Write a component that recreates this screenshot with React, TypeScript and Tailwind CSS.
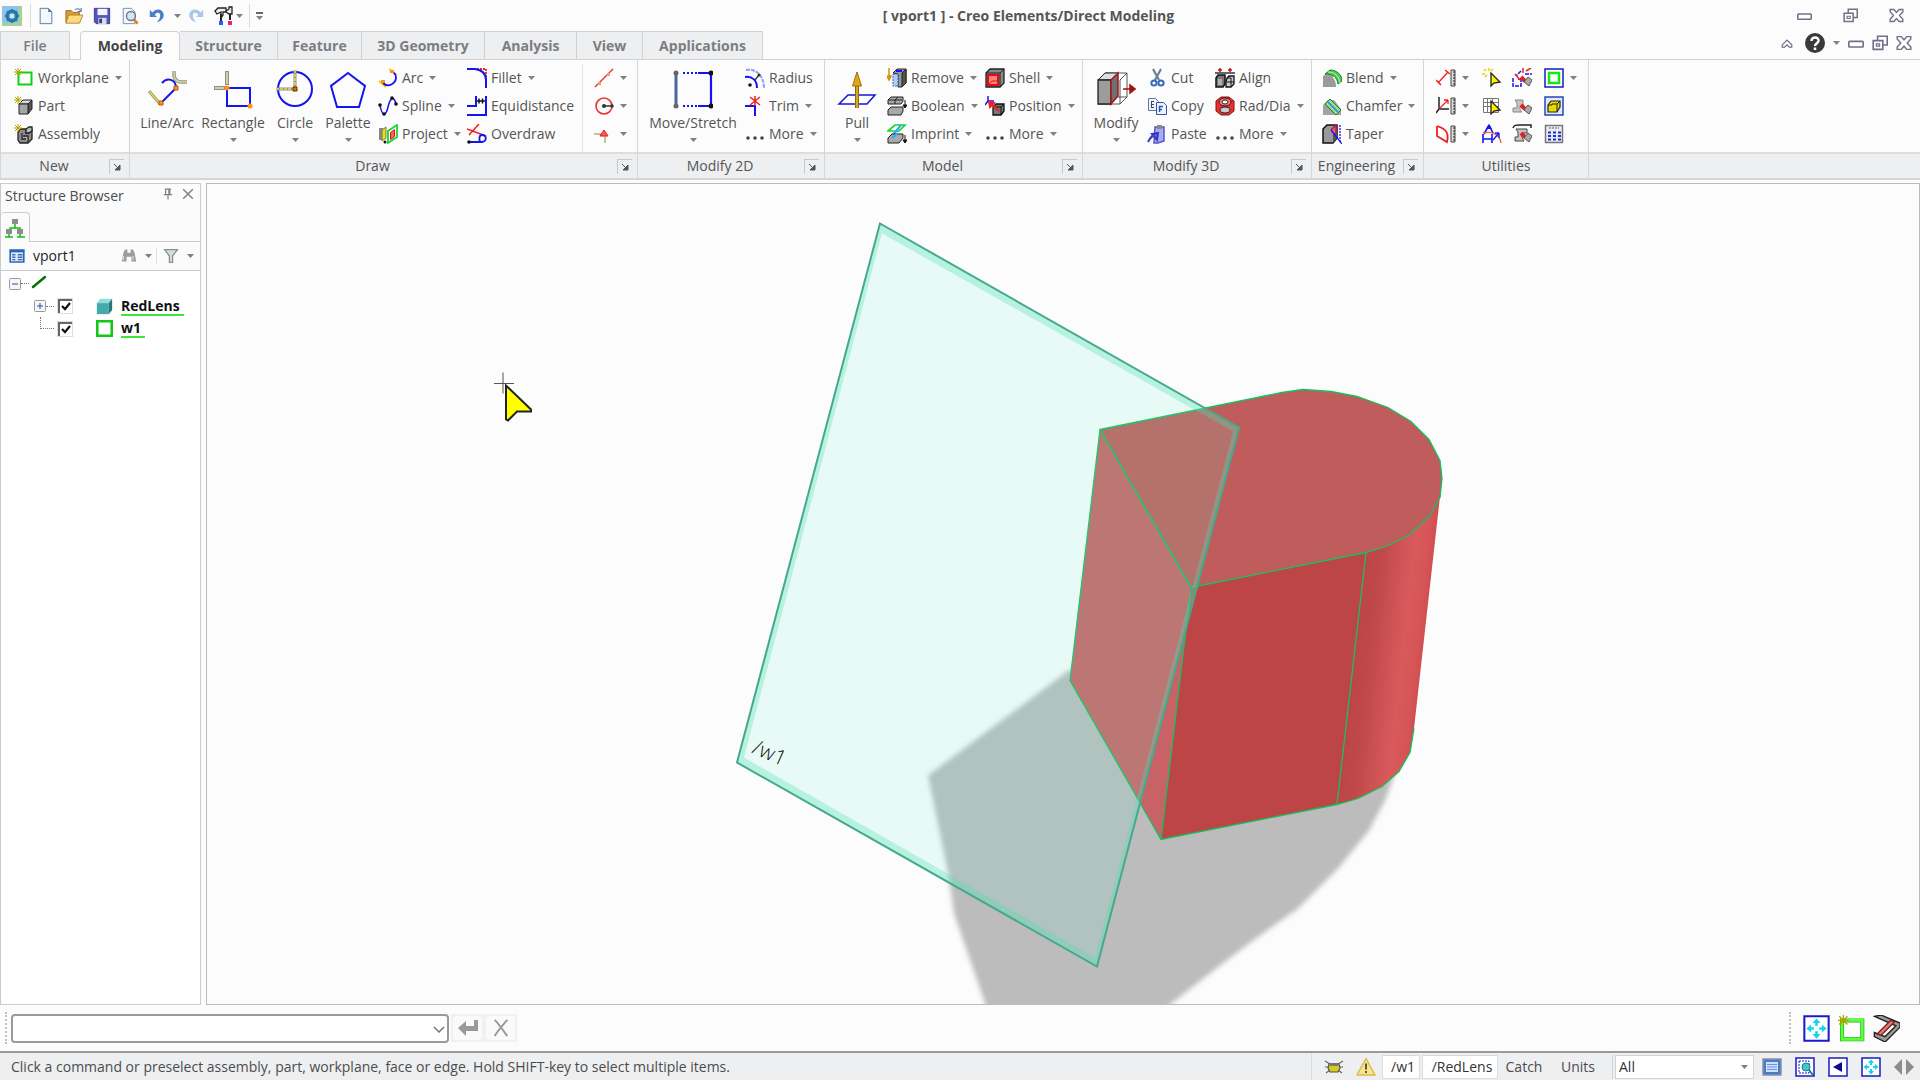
import type { ReactNode } from "react";

const spark = (
  <path d="M4 0v8M0 4h8M1 1l6 6M7 1l-6 6" stroke="#b5a000" strokeWidth="1" fill="none" />
);

const cube = (
  <>
    <path d="M5 8l4-4h9l-4 4z" fill="#d8d8d8" stroke="#222" />
    <path d="M14 8l4-4v9l-4 5z" fill="#555" stroke="#222" />
    <path d="M5 8h9v10H5z" fill="#a5a5a5" stroke="#222" />
  </>
);

const hammer = (
  <>
    <path d="M9 9l4 4" stroke="#e02020" strokeWidth="4" />
    <path d="M12 14l4-5 4 3-3 6z" fill="#aaa" stroke="#555" />
  </>
);

const ruler = (
  <>
    <path d="M15 2h4v16h-4z" fill="#ddd" stroke="#444" />
    <path d="M17 4h2M17 7h2M17 10h2M17 13h2M17 16h2" stroke="#222" />
  </>
);

const fourArrows = (
  <>
    <path d="M1 1h18v18H1z" fill="#fff" stroke="#1a1ac8" strokeWidth="1.500" />
    <path
      d="M10 2.500l3 3.500h-2v2h-2v-2h-2zM10 17.500l3-3.500h-2v-2h-2v2h-2zM2.500 10l3.500-3v2h2v2h-2v2zM17.500 10l-3.500-3v2h-2v2h2v2z"
      fill="#14d4ee"
    />
  </>
);

const pointer = <path d="M9 5v13l3-3 6-1z" fill="#ffee00" stroke="#222" strokeWidth="1.300" />;

// all glyphs are on a 20 x 20 grid, the large ones on 40 x 40
const icons: Record<string, ReactNode> = {
  logo: (
    <>
      <path d="M0 0h20v20H0z" fill="#a9d18e" />
      <path d="M0 0h17v17H0z" fill="#8fc4e6" />
      <circle cx="10" cy="10" r="5" fill="none" stroke="#2374ad" strokeWidth="3" />
      <path d="M10 3v14M3 10h14M5 5l10 10M15 5L5 15" stroke="#2374ad" strokeWidth="1.500" />
      <circle cx="10" cy="10" r="2.500" fill="#cfe6f5" />
    </>
  ),
  newDoc: (
    <>
      <path d="M3.500 1.500h9l4 4v13h-13z" fill="#f3f8ff" stroke="#52719c" />
      <path d="M12.500 1.500v4h4z" fill="#4a6c9c" />
    </>
  ),
  open: (
    <>
      <path d="M1 4h6l2 2h7v11H1z" fill="#d69a3a" stroke="#9a6b1f" />
      <path d="M4 9h16l-4 9H1z" fill="#ffd981" stroke="#b5822c" />
      <path d="M11 3c3-2 5-1 6 1m1-3v4h-4" fill="none" stroke="#5a7fa8" strokeWidth="1.300" />
    </>
  ),
  save: (
    <>
      <path d="M1.500 1.500h17v17h-15l-2-2z" fill="#5356b8" stroke="#35378b" />
      <path d="M5 2h11v7H5z" fill="#f2f4ff" />
      <path d="M6 12h9v7H6z" fill="#d8dbe9" />
      <path d="M7 13h3v5H7z" fill="#35378b" />
    </>
  ),
  preview: (
    <>
      <path d="M2.500 1.500h9l4 4v13h-13z" fill="#f5f9ff" stroke="#7389a8" />
      <circle cx="11" cy="10" r="5" fill="#cfe3f5" fillOpacity=".9" stroke="#6d7780" strokeWidth="1.500" />
      <path d="M14.500 14l4 4.500" stroke="#d5822c" strokeWidth="3" />
    </>
  ),
  undo: (
    <path d="M2 3v8h8L7.500 8.500C10 5 14 6 13.500 10c0 3-2 5-4 7 5-1 8-4 8-8C17 2 9 1 5 6z" fill="#4a80c8" />
  ),
  redo: (
    <path d="M18 3v8h-8l2.500-2.500C10 5 6 6 6.500 10c0 3 2 5 4 7-5-1-8-4-8-8C3 2 11 1 15 6z" fill="#a9c8e8" />
  ),
  tools: (
    <>
      <path d="M1 5l3-3h8v3l3-2V1h3v7h-3L12 6H9v3l-2 3V6L3 8z" fill="#eee" stroke="#222" strokeWidth="1.300" />
      <path d="M7 8v7M16 8v6" stroke="#222" strokeWidth="2" />
      <path d="M5 15h4v4H5z" fill="#1e62ff" />
      <path d="M14 15h4v4h-4z" fill="#f01e78" />
    </>
  ),
  workplane: (
    <>
      <path d="M4.500 4.500h13v12h-13z" fill="#fff" stroke="#12d012" strokeWidth="2" />
      {spark}
    </>
  ),
  part: (
    <>
      {cube}
      {spark}
    </>
  ),
  assembly: (
    <>
      <path d="M4 8l3-3h5v4h3l3-3v9l-4 4H6l-2-3z" fill="#8c8c8c" stroke="#222" strokeWidth="1.300" />
      <path d="M12 5l3-2h3v4l-3 2h-3zM8 9v6h4M9 12h5v6" fill="#bbb" stroke="#222" strokeWidth="1.300" />
      {spark}
    </>
  ),
  arc: (
    <>
      <path d="M1 13l7 6M11 1l8 6" stroke="#e6d200" strokeWidth="2" />
      <path d="M5 15c5 5 13 1 13-6 0-3-2-4-4-6" fill="none" stroke="#1414f0" strokeWidth="1.800" />
      <path d="M3 12h4v3H3zM12 2h4v3h-4z" fill="#ff9020" />
    </>
  ),
  spline: (
    <>
      <path d="M2 9c2 12 6 11 8 2 2-9 6-12 8-3" fill="none" stroke="#1414f0" strokeWidth="1.500" />
      <g fill="#111">
        <circle cx="2" cy="9" r="1.800" />
        <circle cx="6" cy="18" r="1.800" />
        <circle cx="14" cy="2" r="1.800" />
        <circle cx="18" cy="8" r="1.800" />
      </g>
    </>
  ),
  project: (
    <>
      <path d="M1 4h4v12H1z" fill="#888" />
      <path d="M4 6l4-3v11l-4 3z" fill="#eee000" stroke="#777" />
      <path d="M10 7l9-6v12l-9 6z" fill="#fff" stroke="#12d830" strokeWidth="1.800" />
      <path d="M12.500 8.500l4-3v7l-4 3z" fill="#ff6060" stroke="#e01010" />
      <circle cx="7" cy="18" r="1.500" fill="#111" />
    </>
  ),
  fillet: (
    <>
      <path d="M10 1h9v9" fill="none" stroke="#f02020" strokeWidth="1.800" strokeDasharray="2 1" />
      <path d="M0 1h8c7 1 11 5 11 11v8" fill="none" stroke="#1414f0" strokeWidth="2" />
    </>
  ),
  equidistance: (
    <>
      <path d="M0 10h9V0M0 19h19V0" fill="none" stroke="#1414f0" strokeWidth="2" />
      <path d="M10 5h8M12 2.500v5M15.500 2.500v5" stroke="#111" strokeWidth="1.500" />
    </>
  ),
  overdraw: (
    <>
      <path d="M0 5l19 7M2 11L12 0" stroke="#f02020" strokeWidth="1.500" />
      <path d="M2 18h13c5-1 5-7 0-7-3 0-3 4-2 7" fill="none" stroke="#1414f0" strokeWidth="1.800" />
      <circle cx="2" cy="18" r="1.800" fill="#111" />
    </>
  ),
  line: (
    <>
      <path d="M1 19L19 1" stroke="#f03030" strokeWidth="1.500" />
      <path d="M4 14h3v3H4zM13 5h3v3h-3z" fill="#d8a870" />
    </>
  ),
  circleSmall: (
    <>
      <circle cx="10" cy="10" r="8" fill="none" stroke="#f03030" strokeWidth="1.600" />
      <path d="M10 10h9" stroke="#333" strokeWidth="1.500" />
      <circle cx="10" cy="10" r="2" fill="#333" />
      <circle cx="18" cy="10" r="1.800" fill="#333" />
    </>
  ),
  triangle: (
    <>
      <path d="M0 10h13M11 9v10" stroke="#c9bda5" strokeWidth="2" />
      <path d="M6 12l4-6 4 6z" fill="#ff5a5a" stroke="#e81818" />
    </>
  ),
  radius: (
    <>
      <path d="M0 9c7-1 12 3 12 11" fill="none" stroke="#1414f0" strokeWidth="2" />
      <path d="M1 2c10-2 18 6 18 18" fill="none" stroke="#8c9cff" strokeWidth="2" strokeDasharray="4 1" />
      <path d="M10 12l4-5" stroke="#333" strokeWidth="1.300" />
      <circle cx="5" cy="17" r="1.800" fill="#111" />
      <circle cx="14" cy="7" r="1.500" fill="#333" />
    </>
  ),
  trim: (
    <>
      <path d="M0 10h10v10" fill="none" stroke="#1414f0" strokeWidth="2" />
      <path d="M5 1l10 8M15 1L5 9M10 0v10" stroke="#f02020" strokeWidth="1.500" />
    </>
  ),
  more: (
    <g fill="#444">
      <circle cx="3" cy="14" r="1.800" />
      <circle cx="10" cy="14" r="1.800" />
      <circle cx="17" cy="14" r="1.800" />
    </g>
  ),
  remove: (
    <>
      <path d="M6 5l4-4h9v14l-4 4h-4V6z" fill="#999" stroke="#222" />
      <path d="M15 5l4-4v14l-4 4z" fill="#555" stroke="#222" />
      <path d="M6 6h5v12H6z" fill="#b5ccf0" stroke="#3c5fd0" strokeDasharray="2 1" />
      <path d="M9 3h6" stroke="#1414f0" strokeWidth="2" />
      <path d="M2 0v8M0 8h4l-2 4z" fill="#c89810" stroke="#c89810" strokeWidth="1.500" />
    </>
  ),
  boolean: (
    <>
      <path d="M1 4l3-3h12v4l-2 3H1z" fill="#a8a8a8" stroke="#222" />
      <path d="M1 4h14M8 4v4M8 4l3-3M1 14l3-3h12v4l-2 4H1z" fill="#a8a8a8" stroke="#222" />
      <path d="M18 4v7M16 9h4l-2 3z" stroke="#111" fill="#111" />
    </>
  ),
  imprint: (
    <>
      <path d="M1 7l7-6h10l-6 6z" fill="#fff" stroke="#12d830" strokeWidth="1.700" />
      <path d="M5 12L14 1" stroke="#2ca8ff" strokeWidth="2" />
      <path d="M1 14l4-4h11v4l-4 5H1z" fill="#aaa" stroke="#222" />
      <path d="M5 14l6-5" stroke="#2ca8ff" strokeWidth="2" />
      <path d="M18 11v6M16 16h4l-2 3z" stroke="#111" fill="#111" />
    </>
  ),
  shell: (
    <>
      <path d="M1 5l4-4h14v14l-4 4H1z" fill="#888" stroke="#222" strokeWidth="1.300" />
      <path d="M15 5l4-4M1 5h14v14" fill="none" stroke="#222" />
      <path d="M3 7h10v10H3z" fill="#ff8080" stroke="#e01010" strokeWidth="2" />
      <path d="M3 17l4-4h6" stroke="#e01010" fill="none" />
    </>
  ),
  position: (
    <>
      <path d="M3 0v5L0 9M3 5h6" fill="none" stroke="#1414f0" strokeWidth="1.500" />
      <path d="M8 11l3-3h8v7l-3 4H8z" fill="#777" stroke="#111" strokeWidth="1.300" />
      <path d="M8 11h8v8M16 11l3-3" fill="none" stroke="#111" />
      <path d="M14 15L5 7M4 6l1 5 4-4z" stroke="#f02020" strokeWidth="2" fill="#f02020" />
    </>
  ),
  cut: (
    <>
      <path d="M6 1l6 11M14 1L8 12" stroke="#6b7f99" strokeWidth="2.200" />
      <circle cx="7" cy="15" r="2.600" fill="none" stroke="#3868b8" strokeWidth="2" />
      <circle cx="14" cy="15" r="2.600" fill="none" stroke="#3868b8" strokeWidth="2" />
    </>
  ),
  copy: (
    <>
      <path d="M1.500 2.500h7l3 3v9h-10z" fill="#eef4ff" stroke="#6079a8" />
      <path d="M9.500 6.500h7l3 3v9h-10z" fill="#eef4ff" stroke="#2f57a8" />
      <path d="M4 5.500h3M4 8.500h3M4 11.500h3M4.500 5v7" stroke="#444" />
      <path d="M12 10.500h4M12 13.500h3M12.500 10v6" stroke="#2f57a8" strokeWidth="1.500" />
    </>
  ),
  paste: (
    <>
      <path d="M8 3h9v14l-6 2H7z" fill="#a9acee" stroke="#5457d0" strokeWidth="1.500" />
      <path d="M10 1h5v4h-5z" fill="#888" />
      <path d="M1 18c3-6 5-8 10-9M11 9l-6 1 5 6z" stroke="#3438c8" strokeWidth="2" fill="#777" />
    </>
  ),
  align: (
    <>
      <path d="M0 5h20" stroke="#333" strokeWidth="1.500" />
      <path d="M5 0v4M15 0v4M3 2h4M13 2h4" stroke="#c81414" strokeWidth="1.500" />
      <path d="M1 10l2-3h7v9l-2 3H1z" fill="#777" stroke="#111" strokeWidth="1.500" />
      <path d="M3 11h4v6H3z" fill="#b0b0b0" />
      <path d="M12 10l2-2h5v8l-3 3h-5v-5z" fill="#ccc" stroke="#111" strokeWidth="1.300" />
      <path d="M12 10h4v8M12 14h7" fill="none" stroke="#111" />
    </>
  ),
  raddia: (
    <>
      <path d="M1 5l5-4h8l5 4v10l-5 4H6l-5-4z" fill="#e83030" stroke="#8a1010" />
      <ellipse cx="10" cy="6" rx="6" ry="4" fill="#f48080" stroke="#501010" />
      <ellipse cx="10" cy="6" rx="3" ry="2" fill="#fff" stroke="#222" />
      <ellipse cx="10" cy="14" rx="5" ry="3" fill="#ccc" stroke="#222" />
    </>
  ),
  blend: (
    <>
      <path d="M1 8l6-5 4 4v12H1z" fill="#aaa" />
      <path d="M1 8h5c6 0 8 5 8 11H1z" fill="#9a9a9a" />
      <path d="M3 6l5-4c7 0 12 5 12 11l-4 3C15 9 11 6 3 6z" fill="#55c85a" stroke="#128018" />
      <path d="M6 4c7 0 11 4 12 11" fill="none" stroke="#b5f0b5" />
    </>
  ),
  chamfer: (
    <>
      <path d="M1 9l5-5h6l7 9v6H1z" fill="#a3a3a3" />
      <path d="M3 8l5-5 11 11-5 5z" fill="#90e090" stroke="#128018" />
      <path d="M6 6l10 10" stroke="#3c78e8" strokeWidth="1.500" />
    </>
  ),
  taper: (
    <>
      <path d="M1 5l4-4h10v13l-4 5H1z" fill="#999" stroke="#111" strokeWidth="1.500" />
      <path d="M11 6l4-4v12l-4 5z" fill="#555" />
      <path d="M9 6l5-5v9" fill="#e86080" stroke="#c01838" strokeWidth="1.500" />
      <path d="M18 1v17" stroke="#1414f0" strokeWidth="1.300" strokeDasharray="2 1" />
      <path d="M9 6l11 14" stroke="#1414f0" strokeWidth="1.300" />
    </>
  ),
  measure: (
    <>
      <path d="M2 15L12 4" stroke="#f02020" strokeWidth="1.300" />
      <path d="M0 12l5 5M9 2l5 4" stroke="#f02020" strokeWidth="1.500" />
      {ruler}
    </>
  ),
  measureAngle: (
    <>
      <path d="M3 1v12h10M3 13l-3 4" stroke="#222" strokeWidth="1.500" fill="none" />
      <path d="M3 13l9-9M12 4H8M12 4v4" stroke="#f02020" strokeWidth="1.300" />
      {ruler}
    </>
  ),
  measureFace: (
    <>
      <path d="M1 2v10l10 6c2-8 0-13-10-16" stroke="#f02020" strokeWidth="1.800" fill="none" />
      {ruler}
    </>
  ),
  selectStar: (
    <>
      <path d="M2 1l2 2M7 0v3M0 6h3M11 1L9 3M3 9l2-2" stroke="#e6d200" strokeWidth="1.500" />
      {pointer}
    </>
  ),
  selectTable: (
    <>
      <path d="M1.500 2.500h15v14h-15zM1.500 6.500h15M1.500 10.500h15M5.500 2.500v14M10.500 2.500v14" fill="#fff" stroke="#777" />
      {pointer}
    </>
  ),
  dimension: (
    <>
      <path d="M7 1L2 10M7 1l4 8M1 10v9M10 10v9M1 15h9" stroke="#1414f0" strokeWidth="1.600" fill="none" />
      <path d="M4 5l3-5 3 5z" fill="#1414f0" />
      <path d="M1 9c8-2 17 1 18 10" stroke="#e06850" strokeWidth="1.300" fill="none" />
      <path d="M11 16l6-7M17 9h-4M17 9v5" stroke="#1414f0" strokeWidth="1.300" />
    </>
  ),
  hammerLines: (
    <>
      <path d="M1 10v8h8v-7H6M9 3l-5 5M13 6h7" stroke="#1414f0" strokeWidth="1.500" fill="none" strokeDasharray="4 1" />
      <path d="M11 0v5M14 3l5-3M3 6l5 6" stroke="#f02020" strokeWidth="1.500" />
      {hammer}
    </>
  ),
  hammerPart: (
    <>
      <path d="M3 4h8v5H9c-2 3-1 5 1 7H1v-4h4V7z" fill="#c4c4c4" stroke="#888" />
      {hammer}
    </>
  ),
  hammerAssembly: (
    <>
      <path d="M1 4c1-3 3-3 6-3h12v3" stroke="#222" strokeWidth="1.500" fill="none" />
      <path d="M4 5h11v4h-4c-2 3-1 5 1 8H3v-4h3V8z" fill="#c4c4c4" stroke="#444" />
      {hammer}
    </>
  ),
  wpDisplay: (
    <>
      <path d="M1 1h18v18H1z" fill="#fff" stroke="#1a1ac8" strokeWidth="1.500" />
      <path d="M5 5h10v10H5z" fill="#fff" stroke="#12e812" strokeWidth="2.500" />
    </>
  ),
  partDisplay: (
    <>
      <path d="M1 1h18v18H1z" fill="#e8e8f4" stroke="#1c4ac0" strokeWidth="1.500" />
      <path d="M4 9l3-4h9v6l-3 5H4z" fill="#e6dc00" stroke="#222" strokeWidth="1.200" />
      <path d="M4 9h4v-1h5v8M13 8l3-3" fill="none" stroke="#222" />
    </>
  ),
  calc: (
    <>
      <path d="M1.500 1.500h17v17h-17z" fill="#e8ebf2" stroke="#777" strokeWidth="1.500" />
      <path d="M5 4h10" stroke="#666" strokeDasharray="2 1" />
      <path d="M4 8.500h13M4 12h13M4 15.500h13" stroke="#1c30c8" strokeWidth="2" strokeDasharray="3 2" />
    </>
  ),
  tree: (
    <>
      <path d="M10 6v4M5 14v-4h10v4M0 19h8M12 19h8M4 16v3M15 16v3" stroke="#12c012" strokeWidth="1.500" fill="none" />
      <path d="M7 1h6v5H7zM1 11h6v5H1zM12 11h6v5h-6z" fill="#8d8d8d" />
    </>
  ),
  viewport: (
    <>
      <path d="M1.500 2.500h17v15h-17z" fill="#dcebff" stroke="#2c66b8" strokeWidth="2" />
      <path d="M1 4h18" stroke="#2c66b8" strokeWidth="3" />
      <path d="M4 8.500h4M4 11.500h4M4 14.500h4M11 8.500h6M11 11.500h6M11 14.500h6" stroke="#3a6cb0" strokeWidth="1.800" />
    </>
  ),
  binoculars: (
    <>
      <path d="M3 6l2-4h3v4h4V2h3l2 4 2 11h-6v-6H7v6H1z" fill="#9d9d9d" />
      <path d="M3 10v5M15 10v5" stroke="#e2e2e2" strokeWidth="1.300" />
    </>
  ),
  funnel: <path d="M2 2h16l-6 8v8H8v-8z" fill="#d3dfd3" stroke="#8a8f8a" strokeWidth="1.600" />,
  solid: (
    <>
      <path d="M1 6l4-5h14l-4 5z" fill="#8fe0dc" />
      <path d="M1 6h14v13H1z" fill="#46aaa8" />
      <path d="M15 6l4-5v13l-4 5z" fill="#26787c" />
    </>
  ),
  wpSolid: <path d="M1.500 1.500h17v17h-17z" fill="#fff" stroke="#12c812" strokeWidth="3" />,
  fourArrows,
  wpNew: (
    <>
      <path d="M3 4h15v14H3z" fill="#fff" stroke="#12b812" strokeWidth="3" />
      <path d="M3 4h15v14H3z" fill="none" stroke="#5cff3c" strokeWidth="2" />
      {spark}
    </>
  ),
  section: (
    <>
      <path d="M1 1l5-1 14 6v3L9 20l-8-4v-3l8 3 8-8z" fill="#9a9a9a" stroke="#222" />
      <path d="M3 14L13 4l3 1L6 15z" fill="#d88080" stroke="#8a1818" />
    </>
  ),
  bug: (
    <>
      <path d="M1 4l5 3M1 10h4M2 16l4-3M19 4l-5 3M19 10h-4M18 16l-4-3" stroke="#666" strokeWidth="1.200" />
      <path d="M5 7h10l1 4-2 4H6l-2-4z" fill="#d6cc1c" stroke="#555" strokeWidth="1.200" />
      <path d="M6 6h8v3H6z" fill="#777" />
    </>
  ),
  warning: (
    <>
      <path d="M10 1.500L19 18H1z" fill="#f8e48a" stroke="#d9bc4e" strokeWidth="1.500" strokeLinejoin="round" />
      <path d="M10 6.500v6M10 14v2" stroke="#555" strokeWidth="2" />
    </>
  ),
  listView: (
    <>
      <path d="M1 2h18v16H1z" fill="#4a7ad0" stroke="#8a93a3" strokeWidth="1.500" />
      <path d="M4 5h12v10H4z" fill="#cfe0ff" />
      <path d="M5 7.500h10M5 10h10M5 12.500h10" stroke="#6c95e0" />
    </>
  ),
  zoomWindow: (
    <>
      <path d="M1 1h18v18H1z" fill="#fff" stroke="#1a1ac8" strokeWidth="1.500" />
      <path d="M4 4h10v12H4z" fill="none" stroke="#1a1ac8" strokeDasharray="2 1" />
      <circle cx="11" cy="10" r="4" fill="#3cc8d0" stroke="#1d7d88" />
      <path d="M14 13l4 5" stroke="#1d7d88" strokeWidth="2" />
    </>
  ),
  previous: (
    <>
      <path d="M1 1h18v18H1z" fill="#fff" stroke="#1a1ac8" strokeWidth="1.500" />
      <path d="M14 5v10l-9-5z" fill="#0a0a90" />
    </>
  ),
  leftRight: <path d="M8 2v16L0 10zM12 2v16l8-8z" fill="#8c8c8c" />,
  minimize: <rect x="1" y="8" width="18" height="7" rx="1" fill="#fff" stroke="#6f7086" strokeWidth="2" />,
  restore: (
    <>
      <path d="M7 1.500h12v11H7z" fill="#fff" stroke="#6f7086" strokeWidth="2" />
      <path d="M1.500 7h12v11h-12z" fill="#fff" stroke="#6f7086" strokeWidth="2" />
      <path d="M5.500 11h4v3h-4z" fill="none" stroke="#6f7086" strokeWidth="1.500" />
    </>
  ),
  close: (
    <path
      d="M1.500 2h5L10 6l3.500-4h5v3L14 10l4.500 5v3h-5L10 14l-3.500 4h-5v-3L6 10 1.500 5z"
      fill="#fff"
      stroke="#6f7086"
      strokeWidth="1.800"
    />
  ),
  collapse: <path d="M2 13l8-8 8 8v4h-4l-4-4-4 4H2z" fill="#fff" stroke="#6f7086" strokeWidth="2" />,
  help: (
    <>
      <circle cx="10" cy="10" r="10" fill="#3a3a3a" />
      <path d="M6.500 8c0-5 7.500-4.500 7 0-.5 2.500-3.500 2.500-3.500 5M10 14.500v2.500" fill="none" stroke="#fff" strokeWidth="2.500" />
    </>
  ),
  pin: <path d="M5 2h10M6 2v9M13 2v9M3 11h14M10 11v8M11.500 2v9" fill="none" stroke="#808080" strokeWidth="2" />,
  x: <path d="M2 2l16 16M18 2L2 18" stroke="#808080" strokeWidth="2.500" />,
  enter: <path d="M0 10l8-7v5h8V2h4v11H8v5z" fill="#9a9a9a" />,
  cancel: <path d="M3 1c4 4 9 11 14 18M17 1C12 7 7 12 3 19" fill="none" stroke="#9a9a9a" strokeWidth="2.200" />,
  lineArc: (
    <>
      <path d="M2 22l11 13" stroke="#8f8f78" strokeWidth="3" />
      <path d="M2 22l11 13" stroke="#e6d84a" strokeWidth="1.500" />
      <path d="M14 34l15-15" stroke="#1414f0" strokeWidth="2" />
      <path d="M15 14c5-6 14-4 14 5" fill="none" stroke="#1414f0" strokeWidth="2" />
      <path d="M27 2v5c1 4 4 6 7 6h7" fill="none" stroke="#909080" strokeWidth="3.500" />
      <path d="M27 2v5c1 4 4 6 7 6h7" fill="none" stroke="#d9d4a0" strokeWidth="1.500" />
      <path d="M12 32h4v4h-4zM27 17h4v4h-4z" fill="#ff9020" stroke="#b06010" />
    </>
  ),
  rectangle: (
    <>
      <path d="M14 19h23v18H14z" fill="none" stroke="#1414f0" strokeWidth="2" />
      <path d="M14 2v14M1 19h11" stroke="#909080" strokeWidth="4" />
      <path d="M14 3v12M2 19h9" stroke="#d2cfa8" strokeWidth="2" />
      <circle cx="14" cy="19" r="2.500" fill="#ff9020" />
      <circle cx="37" cy="37" r="2.500" fill="#ff9020" />
    </>
  ),
  circle: (
    <>
      <circle cx="20" cy="20" r="17" fill="none" stroke="#1414f0" strokeWidth="2" />
      <path d="M20 1v17M1 20h17" stroke="#909080" strokeWidth="3" />
      <path d="M20 1v17M1 20h17" stroke="#e6dc60" strokeWidth="1.500" strokeDasharray="3 1" />
      <path d="M18 18h4v4h-4z" fill="#d87010" stroke="#5a3000" />
    </>
  ),
  palette: <path d="M20 4l17 13-6 21H9L3 17z" fill="none" stroke="#1414f0" strokeWidth="2" />,
  moveStretch: (
    <>
      <path d="M3 4v33" stroke="#4a64a8" strokeWidth="3" />
      <path d="M38 4v33M25 4h13M25 37h13" stroke="#1414f0" strokeWidth="2.200" />
      <path d="M10 4h15M10 37h15" stroke="#1414f0" strokeWidth="2.200" strokeDasharray="2 2" />
      <g fill="#666">
        <circle cx="3" cy="4" r="2.500" />
        <circle cx="3" cy="37" r="2.500" />
      </g>
      <g fill="#111">
        <circle cx="38" cy="4" r="2.500" />
        <circle cx="38" cy="37" r="2.500" />
      </g>
    </>
  ),
  pull: (
    <>
      <path d="M2 35l9-9h27l-8 9z" fill="#fff" stroke="#1414d8" strokeWidth="1.500" />
      <path d="M20 39V16" stroke="#8a6a10" strokeWidth="4" />
      <path d="M20 39V16" stroke="#d8a818" strokeWidth="2" />
      <path d="M15.500 17L20 3l4.500 14z" fill="#e0a818" stroke="#9a7010" />
    </>
  ),
  modify: (
    <>
      <path d="M9 4h22v24l-7 7H2" fill="#fff" stroke="#555" />
      <path d="M2 11l7-7h13l-7 7z" fill="#ddd" stroke="#222" />
      <path d="M2 11h13v24H2z" fill="#9c9c9c" stroke="#222" strokeWidth="1.300" />
      <path d="M15 11l7-7v23l-7 8z" fill="#707070" stroke="#a01818" strokeWidth="1.500" />
      <path d="M24 11l7-7M24 11v24M22 28h9" fill="none" stroke="#555" />
      <path d="M27 20h9M34 16v8l5-4z" stroke="#a01010" fill="#a01010" strokeWidth="1.500" />
    </>
  ),
};

function Icon({ name, className = "size-5", box = 20 }: { name: string; className?: string; box?: number }) {
  return (
    <svg className={`shrink-0 ${className}`} viewBox={`0 0 ${box} ${box}`} fill="none" aria-hidden="true">
      {icons[name]}
    </svg>
  );
}

function Caret() {
  return (
    <svg className="h-1 w-[7px] shrink-0" viewBox="0 0 7 4" aria-hidden="true">
      <path d="M0 0h7L3.500 4z" fill="#808080" />
    </svg>
  );
}

function Tool({ icon, label, caret }: { icon: string; label?: string; caret?: boolean }) {
  return (
    <button type="button" aria-label={label ?? icon} className="flex h-7 items-center gap-1 whitespace-nowrap">
      <Icon name={icon} />
      {label}
      {caret && (
        <span className="pl-[2px]">
          <Caret />
        </span>
      )}
    </button>
  );
}

function BigTool({ icon, label, caret, className }: { icon: string; label: string; caret?: boolean; className: string }) {
  return (
    <button type="button" className={`flex shrink-0 flex-col items-center whitespace-nowrap pt-[5px] ${className}`}>
      <Icon name={icon} className="size-10" box={40} />
      <span className="mt-1 leading-5">{label}</span>
      {caret && (
        <span className="flex h-[14px] items-center">
          <Caret />
        </span>
      )}
    </button>
  );
}

function Column({ children, className = "" }: { children: ReactNode; className?: string }) {
  return <div className={`flex shrink-0 flex-col items-start ${className}`}>{children}</div>;
}

function Group({ title, className, launcher = true, children }: {
  title: string;
  className: string;
  launcher?: boolean;
  children: ReactNode;
}) {
  return (
    <section aria-label={title} className={`flex shrink-0 flex-col border-r border-[#d4d6d8] ${className}`}>
      <div className="flex h-[92px] pt-1">{children}</div>
      <div className="flex h-[26px] items-center border-t-2 border-[#dcdee0] bg-[#eeeff1]">
        <span className="flex-1 text-center">{title}</span>
        {launcher && (
          <button
            type="button"
            aria-label={`${title} options`}
            className="ml-[2px] mr-[5px] border-l border-t border-[#c6c8ca] p-[3px]"
          >
            <svg className="size-2" viewBox="0 0 8 8" aria-hidden="true">
              <path d="M1 1l5 5M7 2v5H2z" stroke="#555" fill="#555" />
            </svg>
          </button>
        )}
      </div>
    </section>
  );
}

const tabs = [
  { name: "Structure", width: "w-[98px]" },
  { name: "Feature", width: "w-[84px]" },
  { name: "3D Geometry", width: "w-[123px]" },
  { name: "Analysis", width: "w-[92px]" },
  { name: "View", width: "w-[66px]" },
  { name: "Applications", width: "w-[120px]" },
];

function TitleBar() {
  return (
    <header className="flex h-[31px] items-center">
      <div className="flex h-7 items-center">
        <div className="mr-px flex h-6 w-[31px] items-center border-r border-[#dcdcdc] pl-[2px]">
          <Icon name="logo" />
        </div>
        {["newDoc", "open", "save", "preview"].map((name) => (
          <button key={name} type="button" aria-label={name} className="flex w-7 justify-center">
            <Icon name={name} className="size-[18px]" />
          </button>
        ))}
        <button type="button" aria-label="undo" className="flex w-[26px] items-center justify-center">
          <Icon name="undo" className="size-[18px]" />
        </button>
        <button type="button" aria-label="undo list" className="flex h-5 w-[14px] items-center justify-center">
          <Caret />
        </button>
        <button type="button" aria-label="redo" className="flex w-6 justify-center">
          <Icon name="redo" className="size-[18px]" />
        </button>
        <button type="button" aria-label="tools" className="flex h-6 w-[42px] items-center justify-center gap-[2px] border-r border-[#dcdcdc]">
          <Icon name="tools" />
          <Caret />
        </button>
        <button type="button" aria-label="customize" className="flex h-5 w-[18px] flex-col items-center justify-center gap-[2px]">
          <span className="h-[2px] w-[7px] bg-[#666]" />
          <Caret />
        </button>
      </div>
      <h1 className="flex-1 pr-2 text-center font-bold text-[#555]">[ vport1 ] - Creo Elements/Direct Modeling</h1>
      <div className="flex items-center gap-[31px] pr-4">
        {["minimize", "restore", "close"].map((name) => (
          <button key={name} type="button" aria-label={name}>
            <Icon name={name} className="size-[15px]" />
          </button>
        ))}
      </div>
    </header>
  );
}

function TabBar() {
  return (
    <nav className="flex h-[29px] items-stretch border-b border-[#cfd1d3] font-bold text-[#7b7d80]">
      <button type="button" className="mr-[10px] w-[70px] border border-b-0 border-[#cfd1d3] bg-[#eeeff1] font-semibold">
        File
      </button>
      <button type="button" className="-mb-px w-[100px] rounded-t border border-b-0 border-[#cfd1d3] bg-[#fcfcfc] text-[#444]">
        Modeling
      </button>
      {tabs.map((tab) => (
        <button
          key={tab.name}
          type="button"
          className={`border-r border-t border-[#cfd1d3] bg-[#eeeff1] whitespace-nowrap ${tab.width}`}
        >
          {tab.name}
        </button>
      ))}
      <div className="ml-auto flex items-center gap-2 pb-1 pr-2">
        <button type="button" aria-label="collapse ribbon" className="mr-1">
          <Icon name="collapse" className="size-3" />
        </button>
        <button type="button" aria-label="help" className="flex items-center gap-2">
          <Icon name="help" />
          <Caret />
        </button>
        {["minimize", "restore", "close"].map((name) => (
          <button key={name} type="button" aria-label={`${name} viewport`}>
            <Icon name={name} className="size-4" />
          </button>
        ))}
      </div>
    </nav>
  );
}

function Ribbon() {
  return (
    <div className="flex border-b-2 border-[#d4d6d8]">
      <Group title="New" className="w-[130px] border-l">
        <Column className="pl-[13px]">
          <Tool icon="workplane" label="Workplane" caret />
          <Tool icon="part" label="Part" />
          <Tool icon="assembly" label="Assembly" />
        </Column>
      </Group>
      <Group title="Draw" className="w-[508px]">
        <BigTool icon="lineArc" label="Line/Arc" className="ml-[6px] w-[62px]" />
        <BigTool icon="rectangle" label="Rectangle" caret className="w-[70px]" />
        <BigTool icon="circle" label="Circle" caret className="w-[54px]" />
        <BigTool icon="palette" label="Palette" caret className="w-[52px]" />
        <Column className="ml-1 w-[89px]">
          <Tool icon="arc" label="Arc" caret />
          <Tool icon="spline" label="Spline" caret />
          <Tool icon="project" label="Project" caret />
        </Column>
        <Column className="w-[115px]">
          <Tool icon="fillet" label="Fillet" caret />
          <Tool icon="equidistance" label="Equidistance" />
          <Tool icon="overdraw" label="Overdraw" />
        </Column>
        <Column className="border-l border-[#e4e4e4] pl-[11px]">
          <Tool icon="line" caret />
          <Tool icon="circleSmall" caret />
          <Tool icon="triangle" caret />
        </Column>
      </Group>
      <Group title="Modify 2D" className="w-[187px]">
        <BigTool icon="moveStretch" label="Move/Stretch" caret className="ml-[6px] w-[98px]" />
        <Column className="ml-[3px]">
          <Tool icon="radius" label="Radius" />
          <Tool icon="trim" label="Trim" caret />
          <Tool icon="more" label="More" caret />
        </Column>
      </Group>
      <Group title="Model" className="w-[258px]">
        <BigTool icon="pull" label="Pull" caret className="ml-[7px] w-[50px]" />
        <Column className="ml-[5px] w-[98px]">
          <Tool icon="remove" label="Remove" caret />
          <Tool icon="boolean" label="Boolean" caret />
          <Tool icon="imprint" label="Imprint" caret />
        </Column>
        <Column>
          <Tool icon="shell" label="Shell" caret />
          <Tool icon="position" label="Position" caret />
          <Tool icon="more" label="More" caret />
        </Column>
      </Group>
      <Group title="Modify 3D" className="w-[229px]">
        <BigTool icon="modify" label="Modify" caret className="ml-[6px] w-[54px]" />
        <Column className="ml-1 w-[68px]">
          <Tool icon="cut" label="Cut" />
          <Tool icon="copy" label="Copy" />
          <Tool icon="paste" label="Paste" />
        </Column>
        <Column>
          <Tool icon="align" label="Align" />
          <Tool icon="raddia" label="Rad/Dia" caret />
          <Tool icon="more" label="More" caret />
        </Column>
      </Group>
      <Group title="Engineering" className="w-[112px]">
        <Column className="ml-[10px]">
          <Tool icon="blend" label="Blend" caret />
          <Tool icon="chamfer" label="Chamfer" caret />
          <Tool icon="taper" label="Taper" />
        </Column>
      </Group>
      <Group title="Utilities" className="w-[165px]" launcher={false}>
        <Column className="ml-3 w-[46px]">
          <Tool icon="measure" caret />
          <Tool icon="measureAngle" caret />
          <Tool icon="measureFace" caret />
        </Column>
        <Column className="w-[30px]">
          <Tool icon="selectStar" />
          <Tool icon="selectTable" />
          <Tool icon="dimension" />
        </Column>
        <Column className="w-8">
          <Tool icon="hammerLines" />
          <Tool icon="hammerPart" />
          <Tool icon="hammerAssembly" />
        </Column>
        <Column>
          <Tool icon="wpDisplay" caret />
          <Tool icon="partDisplay" />
          <Tool icon="calc" />
        </Column>
      </Group>
      <div className="flex flex-1 flex-col justify-end">
        <div className="h-[26px] border-t-2 border-[#dcdee0] bg-[#eeeff1]" />
      </div>
    </div>
  );
}

function Expander({ open }: { open: boolean }) {
  return (
    <svg className="size-3 shrink-0" viewBox="0 0 12 12" aria-hidden="true">
      <rect x=".5" y=".5" width="11" height="11" rx="1" fill="#f6f6f6" stroke="#999" />
      <path d={open ? "M3 6h6" : "M3 6h6M6 3v6"} stroke="#2c4ca8" />
    </svg>
  );
}

function Check({ label }: { label: string }) {
  return (
    <span className="relative flex">
      <input
        type="checkbox"
        defaultChecked
        aria-label={label}
        className="size-[14px] appearance-none border-l-2 border-t-2 border-[#666] bg-white outline outline-[#ddd]"
      />
      <svg className="pointer-events-none absolute inset-0 size-[14px]" viewBox="0 0 14 14" aria-hidden="true">
        <path d="M4 7l3 3 5-6" fill="none" stroke="#111" strokeWidth="2.200" />
      </svg>
    </span>
  );
}

function StructureBrowser() {
  return (
    <aside className="flex w-[201px] shrink-0 flex-col border border-[#c9cbcd] bg-white">
      <div className="bg-[#fbfbfb]">
        <div className="flex h-7 items-center gap-2 pb-1 pl-1 pr-[6px] text-[#4c4c4c]">
          <h2 className="flex-1 text-sm">Structure Browser</h2>
          <button type="button" aria-label="pin" className="mb-1">
            <Icon name="pin" className="size-3" />
          </button>
          <button type="button" aria-label="close browser" className="mb-1">
            <Icon name="x" className="size-3" />
          </button>
        </div>
        <div className="flex h-[30px] border-b border-[#c9cbcd]">
          <button type="button" aria-label="structure tab" className="-mb-px flex w-[29px] items-center justify-center rounded-t border-r border-t border-[#c9cbcd] bg-[#fbfbfb]">
            <Icon name="tree" />
          </button>
        </div>
        <div className="flex h-[29px] items-center border-b border-[#c9cbcd] pl-2 pr-[6px] text-[#222]">
          <Icon name="viewport" className="size-4" />
          <span className="flex-1 pl-2">vport1</span>
          <button type="button" aria-label="find" className="flex items-center gap-2 border-r border-[#e0e0e0] pr-1">
            <Icon name="binoculars" className="size-4" />
            <Caret />
          </button>
          <button type="button" aria-label="filter" className="flex items-center gap-2 pl-[6px]">
            <Icon name="funnel" className="size-4" />
            <Caret />
          </button>
        </div>
      </div>
      <ul className="pt-px text-[#111]">
        <li className="flex h-[23px] items-center pl-2">
          <Expander open />
          <span className="w-2 border-t border-dotted border-[#777]" />
          <svg className="mb-1 ml-[2px] h-[14px] w-4" viewBox="0 0 16 14" aria-hidden="true">
            <path d="M2 12L14 2" stroke="#0a700a" strokeWidth="2.500" strokeLinecap="round" />
          </svg>
        </li>
        <li className="flex h-[22px] items-center pl-[33px]">
          <Expander open={false} />
          <span className="mr-1 w-2 border-t border-dotted border-[#777]" />
          <Check label="RedLens" />
          <Icon name="solid" className="ml-6 mr-2 size-[17px]" />
          <span className="border-b-2 border-[#3ce63c] pr-1 font-bold leading-[17px]">RedLens</span>
        </li>
        <li className="flex h-[23px] items-center pl-[39px]">
          <span className="mr-1 h-3 w-[14px] -translate-y-1/2 border-b border-l border-dotted border-[#777]" />
          <Check label="w1" />
          <Icon name="wpSolid" className="ml-6 mr-2 size-[17px]" />
          <span className="border-b-2 border-[#3ce63c] pr-1 font-bold leading-[17px]">w1</span>
        </li>
      </ul>
    </aside>
  );
}

const topFace =
  "M1100 429L1282 392L1303 389L1331 391L1357 396L1388 407L1411 421L1429 439L1440 460L1442 478L1440 497L1429 516L1410 534L1386 546L1366 552L1191 587Z";
const roundSide =
  "M1366 552L1386 546L1410 534L1429 516L1440 497L1442 478L1414 728L1410 752L1399 771L1382 786L1358 798L1337 804Z";

function Viewport() {
  return (
    <main className="min-w-0 flex-1 border border-[#b9bbbd] bg-[#fcfcfc]">
      <svg className="h-full w-full" viewBox="207 184 1712 819" role="img" aria-label="RedLens with workplane w1">
        <defs>
          <linearGradient id="round" gradientUnits="userSpaceOnUse" x1="1352" y1="680" x2="1424" y2="688">
            <stop offset="0" stopColor="#bd4546" />
            <stop offset=".2" stopColor="#bf4849" />
            <stop offset=".65" stopColor="#da5a5c" />
            <stop offset=".85" stopColor="#d65456" />
            <stop offset="1" stopColor="#c84848" />
          </linearGradient>
          <filter id="soft">
            <feGaussianBlur stdDeviation="2.500" />
          </filter>
        </defs>
        <path
          d="M1070 669L928 775L949 877L954 913L991 1020H1150L1211 972L1253 940L1298 908L1338 868L1369 830L1385 800L1394 776L1380 700Z"
          fill="#bcbcbc"
          filter="url(#soft)"
        />
        <path d="M1100 429L1191 587L1161 839L1070 680Z" fill="#c96266" />
        <path d="M1191 587L1366 552L1337 804L1161 839Z" fill="#bd4546" />
        <path d={roundSide} fill="url(#round)" />
        <path d={topFace} fill="#c15c5c" />
        <g fill="none" stroke="#14c060" strokeWidth="1.300">
          <path d={topFace} />
          <path d="M1100 429L1070 680L1161 839L1337 804L1358 798L1382 786L1399 771L1410 752L1414 728" />
          <path d="M1100 429L1191 587L1161 839M1366 552L1337 804" />
        </g>
        <path d="M882 233L1233 431L1095 957L744 757Z" fill="#74eeca" fillOpacity=".14" />
        <path
          d="M880 223L1239 427L1097 966L737 762ZM882 233L744 757L1095 957L1233 431Z"
          fill="#56e4b8"
          fillOpacity=".41"
          fillRule="evenodd"
        />
        <path d="M880 223L1239 427L1097 966L737 762Z" fill="none" stroke="#46a98b" strokeWidth="2" />
        <text x="751" y="752" transform="rotate(24 751 752)" fontSize="21" fontWeight="300" fill="#111">
          /w1
        </text>
        <path d="M494 383h20M503 372v21" stroke="#555" />
        <path d="M506 385v34l2 1 9-9h14v-2z" fill="#ffff00" stroke="#222" strokeWidth="2" />
      </svg>
    </main>
  );
}

function Grip() {
  return <span className="h-8 w-0 border-l-2 border-dotted border-[#b9c0cc]" />;
}

function CommandBar() {
  return (
    <div className="flex h-[46px] items-center pl-[5px] pr-5">
      <Grip />
      <div className="relative ml-1 flex w-[438px]">
        <select aria-label="Command" className="h-[29px] w-full appearance-none rounded-sm border-2 border-[#9a9a9a] bg-white px-2" />
        <svg className="pointer-events-none absolute right-1 top-3 h-[7px] w-3" viewBox="0 0 12 7" aria-hidden="true">
          <path d="M1 1l5 5 5-5" fill="none" stroke="#777" strokeWidth="1.500" />
        </svg>
      </div>
      <div className="ml-[2px] flex gap-1 bg-[#f1f1f1] p-[2px]">
        <button type="button" aria-label="enter" className="flex h-6 w-[29px] items-center justify-center rounded bg-[#fafafa]">
          <Icon name="enter" className="h-5 w-6" />
        </button>
        <button type="button" aria-label="cancel" className="flex h-6 w-[29px] items-center justify-center rounded bg-[#fafafa]">
          <Icon name="cancel" className="size-[18px]" />
        </button>
      </div>
      <div className="ml-auto flex items-center gap-2">
        <Grip />
        {["fourArrows", "wpNew", "section"].map((name) => (
          <button key={name} type="button" aria-label={name} className="first-of-type:ml-1">
            <Icon name={name} className="size-[27px]" />
          </button>
        ))}
      </div>
    </div>
  );
}

function StatusBar() {
  return (
    <footer className="flex h-[29px] items-center border-t-2 border-[#9a9a9a] bg-[#eeeff1] pl-[11px] pr-[6px] text-[#4c4c4c]">
      <p className="flex-1">
        Click a command or preselect assembly, part, workplane, face or edge. Hold SHIFT-key to select multiple items.
      </p>
      <div className="flex h-full items-center border-l border-[#dcdcdc]">
        <button type="button" aria-label="debug" className="ml-3">
          <Icon name="bug" />
        </button>
        <button type="button" aria-label="warnings" className="ml-3 mr-[6px]">
          <Icon name="warning" />
        </button>
        <button type="button" className="h-6 w-[38px] border border-[#dcdcdc] bg-white pl-1 text-[#333]">/w1</button>
        <button type="button" className="ml-[2px] h-6 w-[76px] border border-[#dcdcdc] bg-white pl-1 text-[#333]">/RedLens</button>
        <button type="button" className="w-[52px] text-center">Catch</button>
        <button type="button" className="w-[56px] text-center">Units</button>
        <div className="relative ml-[6px] mr-2 flex items-center border-l border-[#d4d4d4] pl-[2px]">
          <select aria-label="Selection filter" className="h-6 w-[139px] appearance-none border border-[#d4d4d4] bg-white pl-[3px] text-[#333]">
            <option>All</option>
          </select>
          <span className="pointer-events-none absolute right-[6px] flex">
            <Caret />
          </span>
        </div>
        <div className="flex gap-[13px]">
          {["listView", "zoomWindow", "previous", "fourArrows", "leftRight"].map((name) => (
            <button key={name} type="button" aria-label={name}>
              <Icon name={name} />
            </button>
          ))}
        </div>
      </div>
    </footer>
  );
}

export default function App() {
  return (
    <div className="flex h-screen min-h-[600px] flex-col overflow-hidden bg-[#fcfcfc] font-['Open_Sans',sans-serif] text-sm text-[#555]">
      <TitleBar />
      <TabBar />
      <Ribbon />
      <div className="flex min-h-0 flex-1 gap-[5px] pt-[3px]">
        <StructureBrowser />
        <Viewport />
      </div>
      <CommandBar />
      <StatusBar />
    </div>
  );
}
